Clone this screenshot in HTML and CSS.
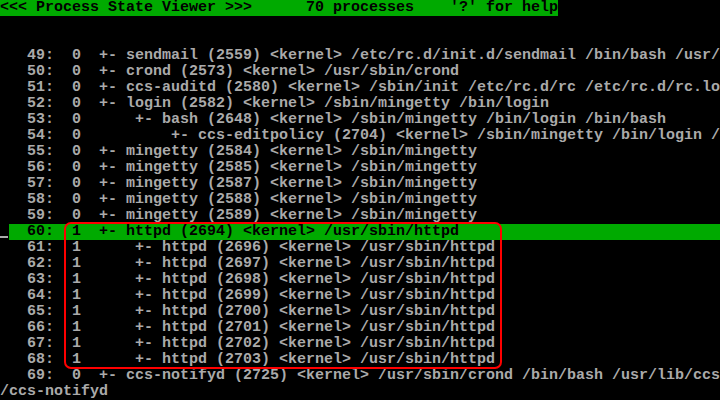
FILE: index.html
```html
<!DOCTYPE html>
<html>
<head>
<meta charset="utf-8">
<link rel="stylesheet" href="styles.css">
</head>
<body>
<div class="screen">
<div class="row"><span class="title">&lt;&lt;&lt; Process State Viewer &gt;&gt;&gt;      70 processes    '?' for help</span></div>
<div class="row"> </div>
<div class="row"> </div>
<div class="row">   49:  0  +- sendmail (2559) &lt;kernel&gt; /etc/rc.d/init.d/sendmail /bin/bash /usr/</div>
<div class="row">   50:  0  +- crond (2573) &lt;kernel&gt; /usr/sbin/crond</div>
<div class="row">   51:  0  +- ccs-auditd (2580) &lt;kernel&gt; /sbin/init /etc/rc.d/rc /etc/rc.d/rc.lo</div>
<div class="row">   52:  0  +- login (2582) &lt;kernel&gt; /sbin/mingetty /bin/login</div>
<div class="row">   53:  0      +- bash (2648) &lt;kernel&gt; /sbin/mingetty /bin/login /bin/bash</div>
<div class="row">   54:  0          +- ccs-editpolicy (2704) &lt;kernel&gt; /sbin/mingetty /bin/login /</div>
<div class="row">   55:  0  +- mingetty (2584) &lt;kernel&gt; /sbin/mingetty</div>
<div class="row">   56:  0  +- mingetty (2585) &lt;kernel&gt; /sbin/mingetty</div>
<div class="row">   57:  0  +- mingetty (2587) &lt;kernel&gt; /sbin/mingetty</div>
<div class="row">   58:  0  +- mingetty (2588) &lt;kernel&gt; /sbin/mingetty</div>
<div class="row">   59:  0  +- mingetty (2589) &lt;kernel&gt; /sbin/mingetty</div>
<div class="row"><span class="cell"><span class="cursor"></span></span><span class="sel">  60:  1  +- httpd (2694) &lt;kernel&gt; /usr/sbin/httpd</span></div>
<div class="row">   61:  1      +- httpd (2696) &lt;kernel&gt; /usr/sbin/httpd</div>
<div class="row">   62:  1      +- httpd (2697) &lt;kernel&gt; /usr/sbin/httpd</div>
<div class="row">   63:  1      +- httpd (2698) &lt;kernel&gt; /usr/sbin/httpd</div>
<div class="row">   64:  1      +- httpd (2699) &lt;kernel&gt; /usr/sbin/httpd</div>
<div class="row">   65:  1      +- httpd (2700) &lt;kernel&gt; /usr/sbin/httpd</div>
<div class="row">   66:  1      +- httpd (2701) &lt;kernel&gt; /usr/sbin/httpd</div>
<div class="row">   67:  1      +- httpd (2702) &lt;kernel&gt; /usr/sbin/httpd</div>
<div class="row">   68:  1      +- httpd (2703) &lt;kernel&gt; /usr/sbin/httpd</div>
<div class="row">   69:  0  +- ccs-notifyd (2725) &lt;kernel&gt; /usr/sbin/crond /bin/bash /usr/lib/ccs</div>
<div class="row">/ccs-notifyd</div>
<div class="mark"></div>
</div>
</body>
</html>
```
FILE: styles.css
```css
html, body {
  margin: 0;
  padding: 0;
  background: #000;
}
.screen {
  position: relative;
  width: 720px;
  height: 400px;
  overflow: hidden;
  background: #000;
  color: #aaaaaa;
  font-family: "Liberation Mono", "DejaVu Sans Mono", monospace;
  font-weight: bold;
  font-size: 15px;
  line-height: 16px;
}
.row {
  display: flex;
  height: 16px;
  white-space: pre;
}
.title {
  background: #00aa00;
  color: #000;
}
.cell {
  display: flex;
  flex-direction: column;
  justify-content: flex-end;
  width: 9px;
  height: 16px;
  padding-bottom: 2px;
  box-sizing: border-box;
}
.cursor {
  display: block;
  width: 8px;
  height: 2px;
  background: #aaaaaa;
}
.sel {
  flex: 1;
  background: #00aa00;
  color: #000;
}
.mark {
  position: absolute;
  left: 64px;
  top: 222px;
  width: 434px;
  height: 143px;
  border: 2px solid #ff0000;
  border-radius: 7px;
}
```
